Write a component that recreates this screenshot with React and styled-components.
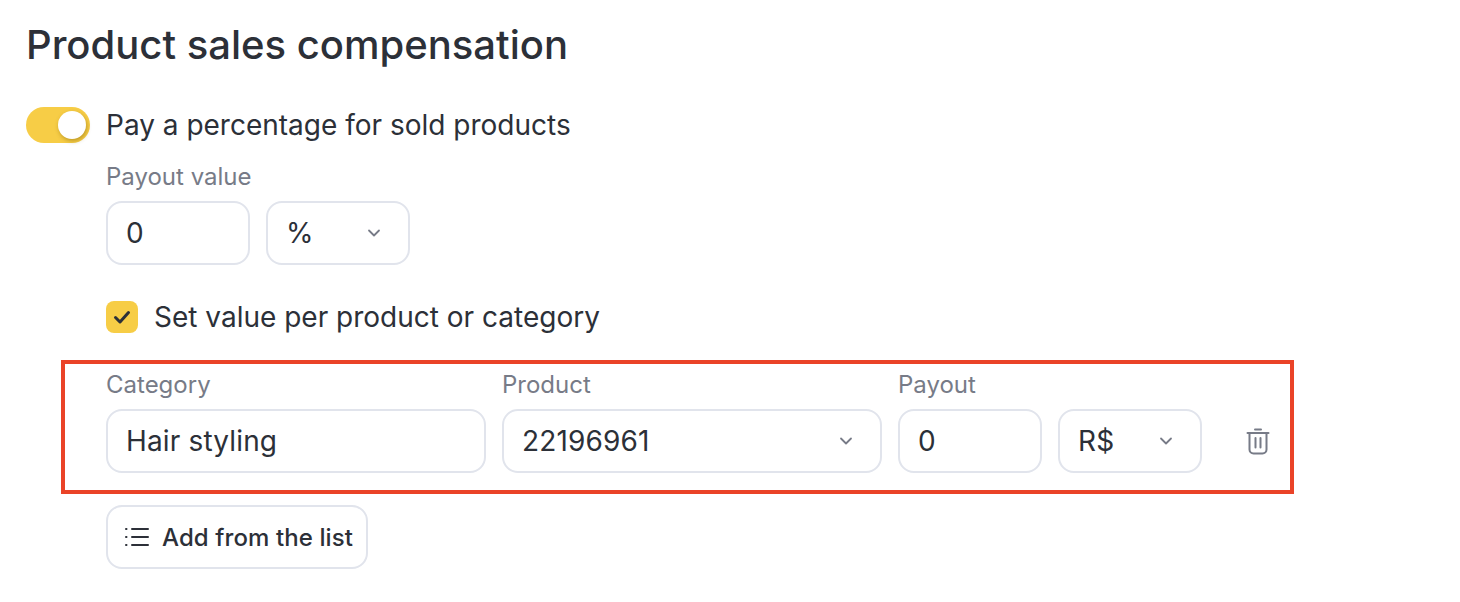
import React from "react";
import styled, { createGlobalStyle } from "styled-components";

const GlobalStyle = createGlobalStyle`
  html, body {
    margin: 0;
    padding: 0;
    background: #fff;
  }
  body {
    font-family: Inter, "Liberation Sans", sans-serif;
    color: #2c3038;
  }
`;

const Page = styled.div`
  width: 1460px;
  height: 602px;
  box-sizing: border-box;
  padding: 22px 0 0 26px;
  overflow: hidden;
`;

const Title = styled.h1`
  margin: 0 0 39px;
  font-size: 40px;
  line-height: 46px;
  font-weight: 500;
  letter-spacing: 0;
`;

const ToggleRow = styled.div`
  display: flex;
  align-items: center;
  gap: 16px;
  height: 36px;
`;

const Track = styled.div`
  width: 64px;
  height: 36px;
  box-sizing: border-box;
  padding: 4px;
  border-radius: 18px;
  background: #f7cd46;
  display: flex;
  justify-content: flex-end;
`;

const Knob = styled.div`
  width: 28px;
  height: 28px;
  border-radius: 50%;
  background: #fff;
  box-shadow: 1px 2px 4px rgba(120, 90, 0, 0.45);
`;

const BodyText = styled.span`
  font-size: 28px;
  line-height: 36px;
`;

const Indented = styled.div`
  margin-left: 80px;
`;

const Label = styled.div`
  font-size: 24px;
  line-height: 32px;
  color: #777b87;
  height: 32px;
  margin-bottom: 8px;
`;

const PayoutBlock = styled.div`
  margin-top: 18px;
`;

const Fields = styled.div`
  display: flex;
  gap: 16px;
`;

const Field = styled.div`
  width: ${(props) => props.$width}px;
  height: 64px;
  box-sizing: border-box;
  border: 2px solid #e1e4ec;
  border-radius: 16px;
  padding: 0 26px 0 18px;
  display: flex;
  align-items: center;
  justify-content: space-between;
  font-size: 28px;
  letter-spacing: 0.15px;
`;

const CheckRow = styled.div`
  display: flex;
  align-items: center;
  gap: 16px;
  margin-top: 34px;
`;

const CheckBox = styled.div`
  width: 32px;
  height: 32px;
  border-radius: 8px;
  background: #f7cd46;
  display: flex;
  align-items: center;
  justify-content: center;
`;

const Highlight = styled.div`
  width: 1233px;
  height: 134px;
  box-sizing: border-box;
  margin: 25px 0 0 35px;
  border: 4px solid #ea4328;
  padding: 5px 0 0 41px;
  display: flex;
`;

const Column = styled.div`
  width: ${(props) => props.$width}px;
  margin-right: 16px;
`;

const TrashButton = styled.div`
  width: 24px;
  height: 64px;
  margin-left: 28px;
  margin-top: 40px;
  display: flex;
  align-items: center;
  justify-content: center;
`;

const AddButton = styled.div`
  width: 262px;
  height: 64px;
  box-sizing: border-box;
  margin-top: 11px;
  padding-left: 17px;
  border: 2px solid #e1e4ec;
  border-radius: 16px;
  display: flex;
  align-items: center;
  gap: 13px;
  font-size: 24px;
  font-weight: 500;
  letter-spacing: 0.1px;
`;

const Chevron = () => (
  <svg width="16" height="16" viewBox="0 0 16 16" fill="none" stroke="#777b87" strokeWidth="1.8" strokeLinecap="round" strokeLinejoin="round">
    <path d="M3 5.5 L8 10.5 L13 5.5" />
  </svg>
);

const Check = () => (
  <svg width="20" height="20" viewBox="0 0 20 20" fill="none" stroke="#2c3038" strokeWidth="3" strokeLinecap="round" strokeLinejoin="round">
    <path d="M3.5 10.5 L8 15 L16.5 5.5" />
  </svg>
);

const Trash = () => (
  <svg width="24" height="28" viewBox="0 0 24 28" fill="none" stroke="#777b87" strokeWidth="2" strokeLinecap="round" strokeLinejoin="round">
    <path d="M9 2.5 H15" />
    <path d="M1.5 6 H22.5" />
    <path d="M3.5 6 V22.5 A4 4 0 0 0 7.5 26.5 H16.5 A4 4 0 0 0 20.5 22.5 V6" />
    <path d="M9.5 11 V20.5" />
    <path d="M14.5 11 V20.5" />
  </svg>
);

const ListIcon = () => (
  <svg width="24" height="20" viewBox="0 0 24 20" fill="none" stroke="#2c3038" strokeWidth="2" strokeLinecap="round">
    <path d="M7 2 H23" />
    <path d="M7 10 H23" />
    <path d="M7 18 H23" />
    <path d="M1 2 H1.5" />
    <path d="M1 10 H1.5" />
    <path d="M1 18 H1.5" />
  </svg>
);

export default function App() {
  return (
    <>
      <GlobalStyle />
      <Page>
        <Title>Product sales compensation</Title>
        <ToggleRow>
          <Track>
            <Knob />
          </Track>
          <BodyText>Pay a percentage for sold products</BodyText>
        </ToggleRow>
        <Indented>
          <PayoutBlock>
            <Label>Payout value</Label>
            <Fields>
              <Field $width={144}>0</Field>
              <Field $width={144}>
                %
                <Chevron />
              </Field>
            </Fields>
          </PayoutBlock>
          <CheckRow>
            <CheckBox>
              <Check />
            </CheckBox>
            <BodyText>Set value per product or category</BodyText>
          </CheckRow>
        </Indented>
        <Highlight>
          <Column $width={380}>
            <Label>Category</Label>
            <Field $width={380}>Hair styling</Field>
          </Column>
          <Column $width={380}>
            <Label>Product</Label>
            <Field $width={380}>
              22196961
              <Chevron />
            </Field>
          </Column>
          <Column $width={144}>
            <Label>Payout</Label>
            <Field $width={144}>0</Field>
          </Column>
          <Column $width={144}>
            <Label>&nbsp;</Label>
            <Field $width={144}>
              R$
              <Chevron />
            </Field>
          </Column>
          <TrashButton>
            <Trash />
          </TrashButton>
        </Highlight>
        <Indented>
          <AddButton>
            <ListIcon />
            Add from the list
          </AddButton>
        </Indented>
      </Page>
    </>
  );
}
